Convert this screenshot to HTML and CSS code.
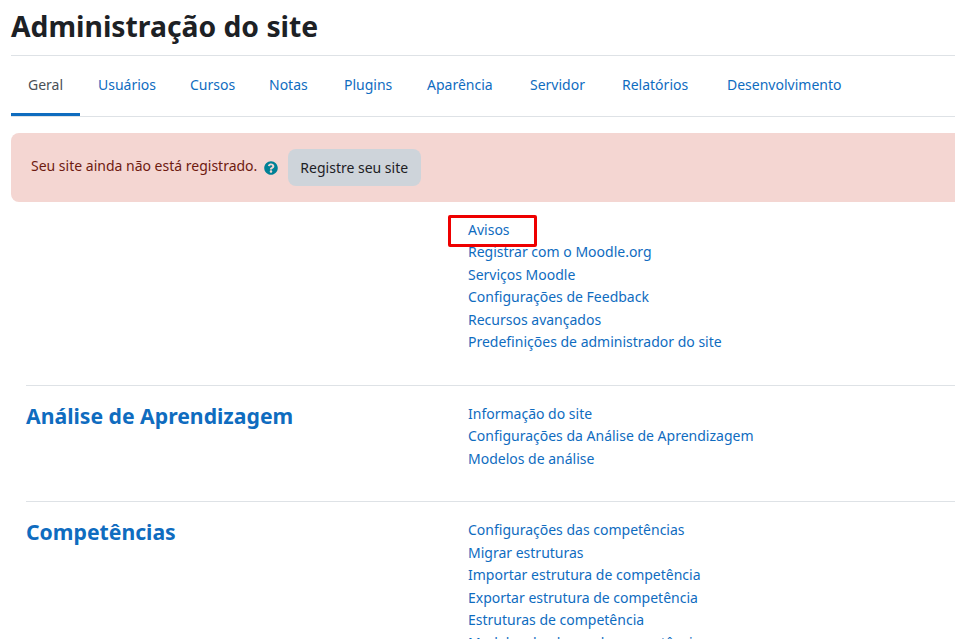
FILE: index.html
```html
<!DOCTYPE html>
<html lang="pt-BR">
<head>
<meta charset="utf-8">
<title>Administração do site</title>
<link rel="stylesheet" href="styles.css">
</head>
<body>
<div class="page">
  <h1 class="title">Administração do site</h1>
  <nav class="tabs">
    <a class="tab active">Geral</a>
    <a class="tab">Usuários</a>
    <a class="tab">Cursos</a>
    <a class="tab">Notas</a>
    <a class="tab">Plugins</a>
    <a class="tab">Aparência</a>
    <a class="tab">Servidor</a>
    <a class="tab">Relatórios</a>
    <a class="tab">Desenvolvimento</a>
  </nav>
  <div class="alert">
    <span class="alert-text">Seu site ainda não está registrado.</span>
    <svg class="help" viewBox="0 0 512 512" width="14" height="14" aria-hidden="true"><path d="M504 256c0 137-111 248-248 248S8 393 8 256 119 8 256 8s248 111 248 248zM262.700 90c-54.500 0-89.300 23-116.500 63.800-3.500 5.300-2.400 12.400 2.700 16.300l34.700 26.300c5.200 3.900 12.600 3 16.700-2.100 17.900-22.700 30.100-35.800 57.300-35.800 20.400 0 45.700 13.100 45.700 32.900 0 15-12.400 22.700-32.500 34-23.500 13.200-54.600 29.600-54.600 70.600V300c0 6.600 5.400 12 12 12h56c6.600 0 12-5.400 12-12v-1.300c0-28.500 83.200-29.600 83.200-106.700 0-58-60.200-102-116.500-102zM256 338c-25.400 0-46 20.600-46 46 0 25.400 20.600 46 46 46s46-20.600 46-46c0-25.400-20.600-46-46-46z"/></svg>
    <a class="btn">Registre seu site</a>
  </div>
  <section class="group first">
    <h2 class="group-title"></h2>
    <ul class="links">
      <li><a>Avisos</a></li>
      <li><a>Registrar com o Moodle.org</a></li>
      <li><a>Serviços Moodle</a></li>
      <li><a>Configurações de Feedback</a></li>
      <li><a>Recursos avançados</a></li>
      <li><a>Predefinições de administrador do site</a></li>
    </ul>
  </section>
  <section class="group second">
    <h2 class="group-title">Análise de Aprendizagem</h2>
    <ul class="links">
      <li><a>Informação do site</a></li>
      <li><a>Configurações da Análise de Aprendizagem</a></li>
      <li><a>Modelos de análise</a></li>
    </ul>
  </section>
  <section class="group">
    <h2 class="group-title">Competências</h2>
    <ul class="links">
      <li><a>Configurações das competências</a></li>
      <li><a>Migrar estruturas</a></li>
      <li><a>Importar estrutura de competência</a></li>
      <li><a>Exportar estrutura de competência</a></li>
      <li><a>Estruturas de competência</a></li>
      <li><a>Modelos de planos de competência</a></li>
    </ul>
  </section>
</div>
<div class="callout"></div>
</body>
</html>
```
FILE: styles.css
```css
html, body {
  margin: 0;
  height: 639px;
  overflow: hidden;
  background: #fff;
}
body {
  position: relative;
  font-family: "Noto Sans", sans-serif;
  font-size: 14px;
  line-height: 22.5px;
  color: #1d2125;
}
.page {
  width: 1200px;
  margin-left: 11px;
}
.title {
  margin: 0;
  height: 49px;
  padding-top: 6px;
  font-size: 28.3px;
  line-height: 40px;
  font-weight: 700;
  border-bottom: 1px solid #dee2e6;
}
.tabs {
  display: grid;
  grid-template-columns: 70px 92px 79px 75px 83px 103px 92px 105px auto;
  justify-content: start;
  height: 60px;
  border-bottom: 1px solid #dee2e6;
}
.tab {
  box-sizing: border-box;
  height: 60px;
  padding: 18px 17px 0;
  color: #0f6cbf;
}
.tab.active {
  justify-self: start;
  width: 69px;
  color: #495057;
  border-bottom: 3px solid #0f6cbf;
}
.alert {
  display: flex;
  align-items: center;
  box-sizing: border-box;
  height: 69px;
  margin-top: 16px;
  padding: 0 20px;
  background: #f4d6d2;
  border-radius: 8px;
  color: #6e1a10;
}
.alert-text {
  padding-bottom: 2px;
}
.help {
  margin: 0 10px 0 7px;
  fill: #008196;
}
.btn {
  box-sizing: border-box;
  height: 37px;
  padding: 8px 13px 6px 12px;
  background: #ced4da;
  border-radius: 8px;
  color: #1d2125;
}
.group {
  display: flex;
  margin-left: 15px;
  padding: 17px 0 31px;
  border-top: 1px solid #dee2e6;
}
.group.first {
  border-top: 0;
  padding-top: 16.5px;
  padding-bottom: 31.5px;
}
.group.second {
  padding-top: 16.5px;
}
.group-title {
  flex: 0 0 442px;
  margin: 0;
  font-size: 21.2px;
  line-height: 26px;
  font-weight: 700;
  color: #0f6cbf;
}
.links {
  margin: 0;
  padding: 0;
  list-style: none;
}
.links a {
  color: #0f6cbf;
}
.callout {
  position: absolute;
  left: 448px;
  top: 215px;
  width: 89px;
  height: 32px;
  box-sizing: border-box;
  border: 3px solid #ee0000;
  border-radius: 2px;
}
```
